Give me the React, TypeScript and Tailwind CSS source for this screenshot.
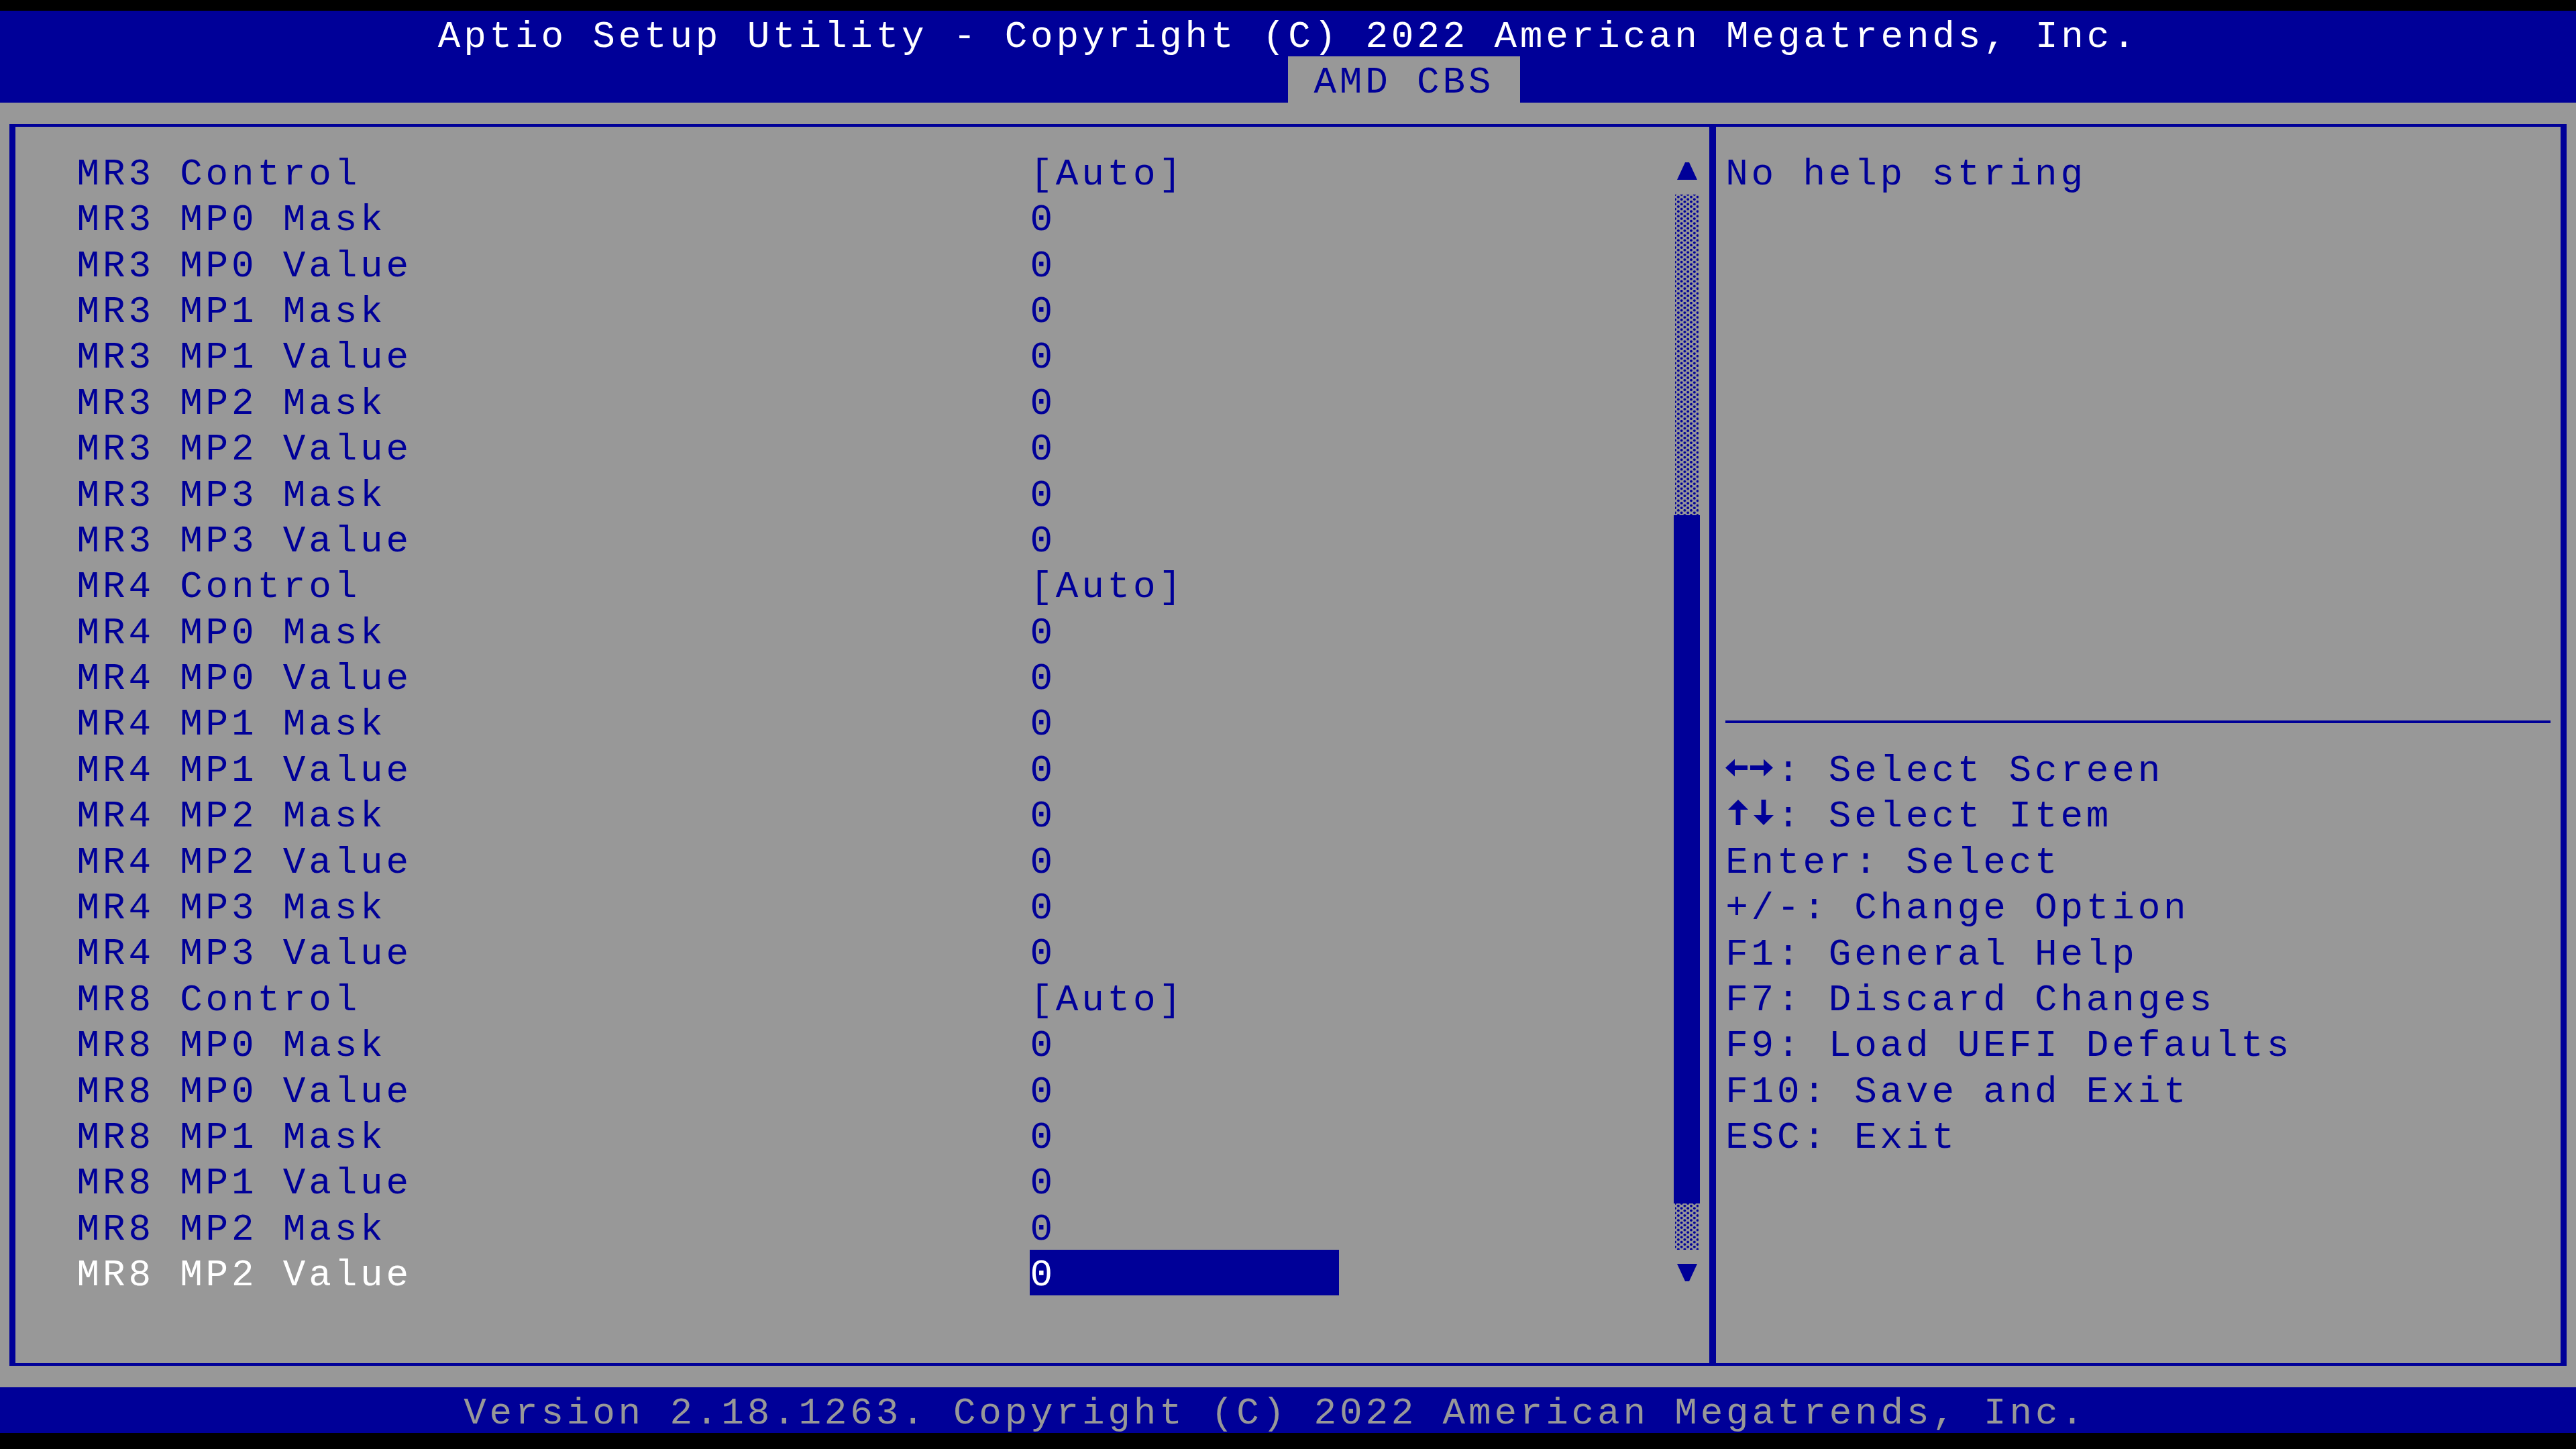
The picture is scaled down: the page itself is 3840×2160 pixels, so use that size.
import React from "react";

// Aptio text-mode setup screen: 100 columns x 31 rows, each cell 38.4 x 68.4 px.

type Item = { label: string; value: string; selected?: boolean };

const groups: { mr: string; control: boolean; mps: number }[] = [
  { mr: "MR3", control: true, mps: 4 },
  { mr: "MR4", control: true, mps: 4 },
];

function buildItems(): Item[] {
  const list: Item[] = [];
  for (const g of groups) {
    list.push({ label: `${g.mr} Control`, value: "[Auto]" });
    for (let i = 0; i < g.mps; i++) {
      list.push({ label: `${g.mr} MP${i} Mask`, value: "0" });
      list.push({ label: `${g.mr} MP${i} Value`, value: "0" });
    }
  }
  list.push({ label: "MR8 Control", value: "[Auto]" });
  for (let i = 0; i < 3; i++) {
    list.push({ label: `MR8 MP${i} Mask`, value: "0" });
    list.push({ label: `MR8 MP${i} Value`, value: "0", selected: i === 2 });
  }
  return list;
}

const items = buildItems();

const helpKeys = [
  "Enter: Select",
  "+/-: Change Option",
  "F1: General Help",
  "F7: Discard Changes",
  "F9: Load UEFI Defaults",
  "F10: Save and Exit",
  "ESC: Exit",
];

function Cell({ children, className = "" }: { children: React.ReactNode; className?: string }) {
  return <div className={`pt-[11.6px] leading-[54.6px] whitespace-pre ${className}`}>{children}</div>;
}

function UpArrow() {
  return (
    <svg width="30" height="26" viewBox="0 0 30 26">
      <polygon points="12,0 18,0 30,26 0,26" fill="#000098" />
    </svg>
  );
}

function DownArrow() {
  return (
    <svg width="30" height="26" viewBox="0 0 30 26">
      <polygon points="0,0 30,0 18,26 12,26" fill="#000098" />
    </svg>
  );
}

function LeftRightArrows() {
  return (
    <svg width="76.8" height="68.4" viewBox="0 0 76.8 68.4" className="shrink-0">
      <polygon points="0,34.6 14,21.6 14,47.6" fill="#000098" />
      <rect x="12" y="31" width="21" height="7" fill="#000098" />
      <rect x="37" y="31" width="21" height="7" fill="#000098" />
      <polygon points="71,34.6 57,21.6 57,47.6" fill="#000098" />
    </svg>
  );
}

function UpDownArrows() {
  return (
    <svg width="76.8" height="68.4" viewBox="0 0 76.8 68.4" className="shrink-0">
      <polygon points="19,13 4,28 34,28" fill="#000098" />
      <rect x="15.5" y="26" width="7" height="25" fill="#000098" />
      <rect x="53.5" y="13" width="7" height="25" fill="#000098" />
      <polygon points="42,36 72,36 57,51" fill="#000098" />
    </svg>
  );
}

const dotted =
  "bg-[radial-gradient(circle,#000098_1.7px,transparent_2.1px),radial-gradient(circle,#000098_1.7px,transparent_2.1px)] bg-size-[9.6px_7.2px] bg-position-[0px_0px,4.8px_3.6px]";

export default function App() {
  return (
    <div className="w-[3840px] h-[2160px] bg-black flex flex-col pt-[16px] font-['Liberation_Mono','DejaVu_Sans_Mono',monospace] text-[56px] tracking-[4.8px] overflow-hidden">
      {/* title bar */}
      <header className="bg-[#000098] h-[136.8px] shrink-0 flex flex-col">
        <div className="h-[68.4px] pl-[652.8px] text-white">
          <Cell>Aptio Setup Utility - Copyright (C) 2022 American Megatrends, Inc.</Cell>
        </div>
        <div className="h-[68.4px] pl-[1920px] flex">
          <div className="w-[345.6px] bg-[#989898] pl-[38.4px] text-[#000098]">
            <Cell>AMD CBS</Cell>
          </div>
        </div>
      </header>

      {/* body */}
      <main className="bg-[#989898] h-[1915.2px] shrink-0 pt-[32.2px] pb-[32.2px] px-[14.4px]">
        <div className="h-full border-y-4 border-x-[9.6px] border-[#000098] flex">
          {/* settings list */}
          <section className="w-[2524.8px] shrink-0 pt-[32.2px] flex">
            <div className="flex-1 pl-[91.2px] flex flex-col">
              {items.map((it, i) => (
                <div key={i} className="h-[68.4px] flex">
                  <Cell className={`w-[1420.8px] ${it.selected ? "text-white" : "text-[#000098]"}`}>{it.label}</Cell>
                  {it.selected ? (
                    <div className="w-[460.8px] h-full bg-[#000098] text-white">
                      <Cell>{it.value}</Cell>
                    </div>
                  ) : (
                    <Cell className="text-[#000098]">{it.value}</Cell>
                  )}
                </div>
              ))}
            </div>
            {/* scroll bar */}
            <div className="w-[38.4px] mr-[14.4px] flex flex-col">
              <div className="h-[68.4px] flex items-center justify-center">
                <UpArrow />
              </div>
              <div className={`h-[478.8px] mx-[2px] ${dotted}`} />
              <div className="h-[1026px] bg-[#000098]" />
              <div className={`h-[68.4px] mx-[2px] ${dotted}`} />
              <div className="h-[68.4px] flex items-center justify-center">
                <DownArrow />
              </div>
            </div>
          </section>

          <div className="w-[9.6px] bg-[#000098] shrink-0" />

          {/* help panel */}
          <section className="flex-1 pt-[32.2px] pl-[14.4px] pr-[14.4px] flex flex-col text-[#000098]">
            <div className="h-[820.8px]">
              <Cell>No help string</Cell>
            </div>
            <div className="h-[68.4px] flex items-center">
              <div className="h-[4px] w-full bg-[#000098]" />
            </div>
            <div className="h-[68.4px] flex">
              <LeftRightArrows />
              <Cell>: Select Screen</Cell>
            </div>
            <div className="h-[68.4px] flex">
              <UpDownArrows />
              <Cell>: Select Item</Cell>
            </div>
            {helpKeys.map((k) => (
              <div key={k} className="h-[68.4px]">
                <Cell>{k}</Cell>
              </div>
            ))}
          </section>
        </div>
      </main>

      {/* version line */}
      <footer className="bg-[#000098] h-[68.4px] shrink-0 pl-[691.2px] text-[#989898]">
        <Cell>Version 2.18.1263. Copyright (C) 2022 American Megatrends, Inc.</Cell>
      </footer>
      <div className="flex-1 bg-black" />
    </div>
  );
}
